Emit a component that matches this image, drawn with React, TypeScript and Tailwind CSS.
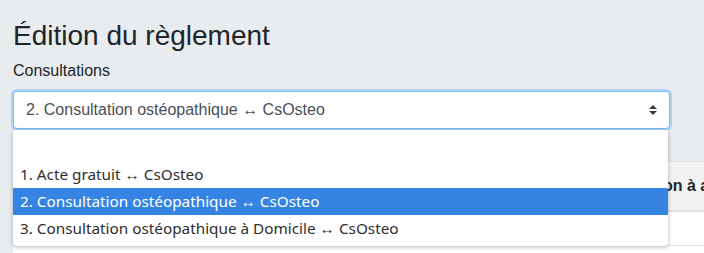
import React from 'react';

const OPTIONS = [
  '',
  '1. Acte gratuit ↔ CsOsteo',
  '2. Consultation ostéopathique ↔ CsOsteo',
  '3. Consultation ostéopathique à Domicile ↔ CsOsteo',
];

const SELECTED = 2;

export default function App() {
  return (
    <div className="relative w-[704px] h-[253px] overflow-hidden bg-[#e9ecef] font-['Liberation_Sans',Arial,sans-serif] text-[#212529]">
      <div className="pt-[19px] pl-[13px]">
        {/* Title */}
        <h3 className="text-[28px] leading-[1.2] h-[34px] mb-[6px]">Édition du règlement</h3>
        <label className="block text-[16px] leading-[24px] mb-[8px]">Consultations</label>

        {/* Select (focused) */}
        <div className="relative w-[657px] h-[38px] bg-white border border-[#80bdff] rounded-[4px] shadow-[0_0_0_2px_rgba(0,123,255,0.25)] flex items-center pl-[12px] text-[16px] text-[#495057]">
          <span>{OPTIONS[SELECTED]}</span>
          <svg className="absolute right-[12px] top-[13px]" width="8" height="10" viewBox="0 0 4 5">
            <path fill="#343a40" d="M2 0L0 2h4zm0 5L0 3h4z" />
          </svg>
        </div>

        {/* Table behind the dropdown */}
        <div className="mt-[32px] w-[900px] bg-white">
          <div className="flex border-t border-[#dee2e6] border-b-2 bg-[#f2f2f2] font-bold text-[16px] leading-[24px]">
            <div className="w-[566px] py-[12px] px-[12px]"></div>
            <div className="flex-1 py-[12px] px-[12px]">Désignation à afficher</div>
          </div>
          <div className="h-[34px] border-b border-[#dee2e6]"></div>
          <div className="h-[20px]"></div>
        </div>
      </div>

      {/* Native dropdown popup */}
      <div className="absolute left-[13px] top-[130px] w-[655px] bg-white rounded-b-[4px] shadow-[0_1px_4px_rgba(0,0,0,0.3)] py-[4px] font-['Noto_Sans',sans-serif] text-[15.3px] text-[#2e2e2e]">
        {OPTIONS.map((opt, i) => (
          <div
            key={i}
            className={
              i === SELECTED
                ? 'h-[27px] flex items-center pl-[7px] bg-[#3584e4] text-white'
                : 'h-[27px] flex items-center pl-[7px]'
            }
          >
            {opt}
          </div>
        ))}
      </div>
    </div>
  );
}
